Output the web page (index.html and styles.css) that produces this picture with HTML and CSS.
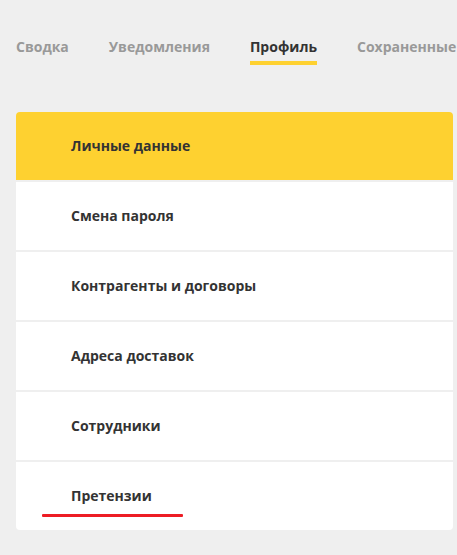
FILE: index.html
```html
<!DOCTYPE html>
<html lang="ru">
<head>
<meta charset="utf-8">
<link rel="stylesheet" href="styles.css">
</head>
<body>
<div class="page">
  <nav class="tabs">
    <span class="tab">Сводка</span>
    <span class="tab">Уведомления</span>
    <span class="tab active">Профиль</span>
    <span class="tab">Сохраненные</span>
  </nav>
  <ul class="menu">
    <li class="item selected">Личные данные</li>
    <li class="item">Смена пароля</li>
    <li class="item">Контрагенты и договоры</li>
    <li class="item">Адреса доставок</li>
    <li class="item">Сотрудники</li>
    <li class="item marked"><span class="label">Претензии</span></li>
  </ul>
</div>
</body>
</html>
```
FILE: styles.css
```css
html, body {
  margin: 0;
  padding: 0;
  background: #efefef;
  overflow: hidden;
}
.page {
  width: 457px;
  height: 555px;
  font-family: "Open Sans", "Liberation Sans", sans-serif;
  font-weight: 700;
  font-size: 14px;
  overflow: hidden;
}
.tabs {
  display: flex;
  gap: 40px;
  padding: 36px 0 0 16px;
  white-space: nowrap;
  height: 29px;
}
.tab {
  color: #999999;
  line-height: 22px;
  height: 29px;
  box-sizing: border-box;
}
.tab.active {
  color: #333333;
  border-bottom: 4px solid #fed130;
}
.menu {
  list-style: none;
  margin: 47px 4px 0 16px;
  padding: 0;
  display: flex;
  flex-direction: column;
  gap: 2px;
  border-radius: 4px;
  overflow: hidden;
}
.item {
  height: 68px;
  background: #ffffff;
  color: #333333;
  display: flex;
  align-items: center;
  padding-left: 55px;
  line-height: 20px;
  padding-bottom: 1px;
  box-sizing: border-box;
}
.item.selected {
  background: #fed130;
}
.item.marked {
  position: relative;
}
.item.marked::after {
  content: "";
  position: absolute;
  left: 26px;
  width: 141px;
  top: 52px;
  height: 3px;
  border-radius: 1px;
  background: #ed1c24;
}
```
